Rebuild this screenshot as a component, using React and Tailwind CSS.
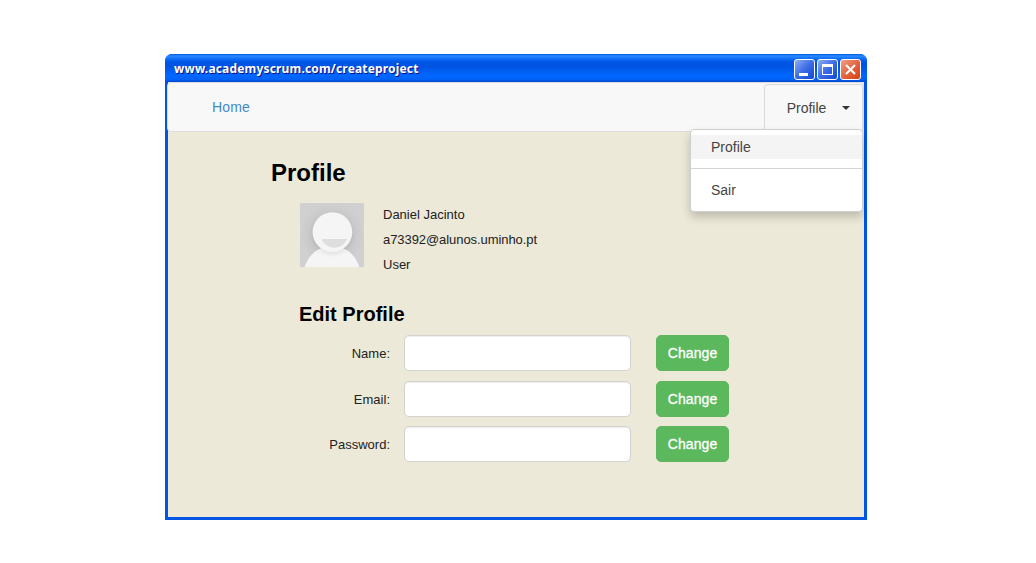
import React from "react";

function WindowButton({ kind }) {
  const close = kind === "close";
  return (
    <button type="button" aria-label={kind} className="block h-[21px] w-[21px]">
      <svg viewBox="0 0 21 21" className="block h-[21px] w-[21px]">
        <defs>
          <linearGradient id={"fill-" + kind} x1="0" y1="0" x2="1" y2="1">
            <stop offset="0" stopColor={close ? "#f0a088" : "#91b0f5"} />
            <stop offset="0.5" stopColor={close ? "#e36743" : "#3c6de5"} />
            <stop offset="1" stopColor={close ? "#d63d0c" : "#0f45d0"} />
          </linearGradient>
        </defs>
        <rect x="0.5" y="0.5" width="20" height="20" rx="2.5" fill={"url(#fill-" + kind + ")"} stroke="#fff" />
        {kind === "minimize" && <rect x="5" y="14" width="9" height="3" fill="#fff" />}
        {kind === "maximize" && (
          <path fillRule="evenodd" d="M5 5h11v11H5zM6 8v7h9V8z" fill="#fff" />
        )}
        {close && <path d="M6 6l9 9M15 6l-9 9" stroke="#fff" strokeWidth="2.1" />}
      </svg>
    </button>
  );
}

function TitleBar() {
  return (
    <header className="flex h-7 items-center justify-between rounded-t-[7px] bg-[linear-gradient(#0058e6_0,#2a8bff_2px,#1474fa_4px,#0055e5_8px,#0054e3_13px,#0066ff_21px,#0064fb_25px,#0047cf_28px)] pl-[9px] pr-[6px]">
      <h1 className="w-[260px] whitespace-nowrap pt-[2px] font-['Noto_Sans',sans-serif] text-[12px] font-bold leading-[28px] tracking-[0.17px] text-white [text-shadow:1px_1px_0_#0f1089]">
        www.academyscrum.com/createproject
      </h1>
      <div className="flex gap-[2px] pt-[3px]">
        <WindowButton kind="minimize" />
        <WindowButton kind="maximize" />
        <WindowButton kind="close" />
      </div>
    </header>
  );
}

function NavBar() {
  return (
    <nav className="-ml-px flex h-[50px] items-start justify-between rounded border border-[#dcdcdc] bg-[#f8f8f8] text-[14px]">
      <a className="pl-[44px] leading-[48px] tracking-[0.15px] text-[#428bca]">Home</a>
      <div className="relative mt-px h-[47px] w-[99px] rounded-t border border-b-0 border-[#dadada] bg-[#f8f8f8]">
        <button type="button" className="flex w-full items-center pl-[21px] text-[#444] leading-[46px]">
          <span className="w-[41px]">Profile</span>
          <svg viewBox="0 0 8 4" className="ml-[15px] h-1 w-2"><path d="M0 0h8L4 4z" fill="#333" /></svg>
        </button>
        <div className="absolute -right-px top-[44px] z-10 h-[83px] w-[173px] rounded border border-[#cfcfcf] bg-white pt-[5px] text-[#444] shadow-[0_5px_10px_rgba(0,0,0,0.2)]">
          <a className="block h-6 bg-[#f4f4f4] pl-[20px] leading-[25px]">Profile</a>
          <hr className="mt-[9px] border-[#d5d5d5]" />
          <a className="mt-[9px] block h-6 pl-[20px] leading-[25px]">Sair</a>
        </div>
      </div>
    </nav>
  );
}

function Avatar() {
  return (
    <svg viewBox="0 0 64 64" className="h-16 w-16 shrink-0">
      <defs>
        <radialGradient id="backdrop">
          <stop offset="0.5" stopColor="#c4c4c4" />
          <stop offset="1" stopColor="#d0d0d0" />
        </radialGradient>
        <filter id="soft" x="-30%" y="-30%" width="160%" height="160%">
          <feDropShadow dx="0" dy="2" stdDeviation="2" floodColor="#000" floodOpacity="0.1" />
        </filter>
        <clipPath id="frame"><rect width="64" height="64" /></clipPath>
      </defs>
      <rect width="64" height="64" fill="url(#backdrop)" />
      <g clipPath="url(#frame)">
        <path d="M4 66C8 52 18 43 32 43s24 9 28 23z" fill="#f5f5f5" />
        <circle cx="32.4" cy="29" r="19.8" fill="#f5f5f5" filter="url(#soft)" />
        <path d="M21.5 36h25.500C43 47.500 26 47.500 21.500 36z" fill="#dedede" />
      </g>
    </svg>
  );
}

function Field({ label, type }) {
  return (
    <div className="flex h-9 items-center">
      <label className="w-[91px] whitespace-nowrap pt-[2px] text-right text-[13px] text-[#222]">{label}:</label>
      <input type={type} aria-label={label} className="ml-[14px] h-9 w-[227px] rounded-[5px] border border-[#d2d2d2] bg-white shadow-[inset_0_1px_1px_rgba(0,0,0,0.075)]" />
      <button type="button" className="ml-[25px] h-9 w-[73px] rounded-[5px] border border-[#5db55d] bg-[#5cb85c] text-[14px] tracking-[0.1px] text-white [-webkit-text-stroke:0.3px_white]">Change</button>
    </div>
  );
}

export default function App() {
  return (
    <div className="h-[563px] w-[1036px] overflow-hidden bg-white pl-[165px] pt-[54px] font-['Liberation_Sans',Arial,sans-serif]">
      <div className="flex h-[466px] w-[702px] flex-col rounded-t-[7px] bg-[#0055e5]">
        <TitleBar />
        <main className="mx-[3px] mb-[3px] flex-1 bg-[#ece9d8]">
          <NavBar />
          <section className="pl-[103px] pt-[27px]">
            <h2 className="text-[24px] font-bold leading-[28px] text-black">Profile</h2>
            <div className="ml-[29px] mt-[16px] flex gap-[19px]">
              <Avatar />
              <div className="whitespace-nowrap text-[13px] leading-[25px] text-[#222]">
                <p className="-mt-px">Daniel Jacinto</p>
                <p className="tracking-[-0.07px]">a73392@alunos.uminho.pt</p>
                <p>User</p>
              </div>
            </div>
          </section>
          <section className="pl-[131px] pt-[24px]">
            <h3 className="text-[20px] font-bold leading-[26px] text-black">Edit Profile</h3>
            <form className="mt-[8px] flex flex-col">
              <Field label="Name" type="text" />
              <div className="mt-[10px]"><Field label="Email" type="email" /></div>
              <div className="mt-[9px]"><Field label="Password" type="password" /></div>
            </form>
          </section>
        </main>
      </div>
    </div>
  );
}
